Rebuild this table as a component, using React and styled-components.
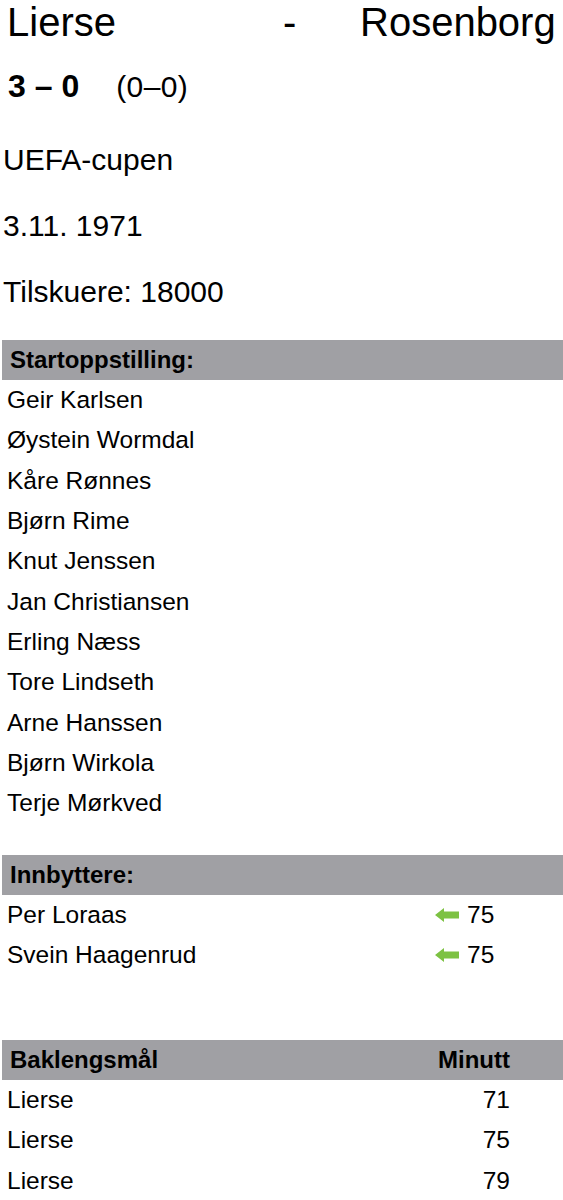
import React from "react";
import styled, { createGlobalStyle } from "styled-components";

const Global = createGlobalStyle`
  html, body { margin: 0; padding: 0; background: #fff; }
  body { font-family: "Liberation Sans", Arial, sans-serif; color: #000; }
`;

const Page = styled.div`
  width: 563px;
  overflow: hidden;
`;

const TitleRow = styled.div`
  display: grid;
  grid-template-columns: 276px 77px auto;
  padding-left: 7px;
  font-size: 40px;
  line-height: 45px;
  white-space: nowrap;
`;

const ScoreRow = styled.div`
  margin-top: 23px;
  padding-left: 8px;
  font-size: 30px;
  line-height: 36px;
  height: 36px;
  display: flex;
  align-items: baseline;
`;

const Score = styled.span`
  font-weight: bold;
  font-size: 32px;
`;

const HalfTime = styled.span`
  margin-left: 37px;
  letter-spacing: 0.4px;
`;

const Info = styled.div`
  padding-left: 3px;
  font-size: 30px;
  line-height: 66px;
`;

const InfoBlock = styled.div`
  margin-top: 23px;
  margin-bottom: 15px;
`;

const Table = styled.div`
  margin-left: 2px;
  margin-top: ${(p) => p.$top || 0}px;
  font-size: 24.5px;
`;

const HeadRow = styled.div`
  display: grid;
  grid-template-columns: ${(p) => p.$cols || "1fr"};
  background: #a0a0a4;
  height: 40px;
  align-items: center;
  font-weight: bold;
  font-size: 24px;
`;

const Row = styled.div`
  display: grid;
  grid-template-columns: ${(p) => p.$cols || "1fr"};
  height: 40.3px;
  align-items: center;
  white-space: nowrap;
`;

const HeadCell = styled.div`
  padding-left: 8px;
  text-align: ${(p) => (p.$right ? "right" : "left")};
  padding-right: ${(p) => (p.$right ? "53px" : "0")};
`;

const Cell = styled.div`
  padding-left: 5px;
  text-align: ${(p) => (p.$right ? "right" : "left")};
  padding-right: ${(p) => (p.$right ? "53px" : "0")};
`;

const SubCell = styled.div`
  display: flex;
  align-items: center;
  gap: 8px;
`;

const Arrow = () => (
  <svg width="24" height="14" viewBox="0 0 24 14" aria-hidden="true">
    <polygon
      points="0,7 9,0 9,3.5 24,3.5 24,10.5 9,10.5 9,14"
      fill="#7dc243"
    />
  </svg>
);

const starters = [
  "Geir Karlsen",
  "Øystein Wormdal",
  "Kåre Rønnes",
  "Bjørn Rime",
  "Knut Jenssen",
  "Jan Christiansen",
  "Erling Næss",
  "Tore Lindseth",
  "Arne Hanssen",
  "Bjørn Wirkola",
  "Terje Mørkved",
];

const subs = [
  { name: "Per Loraas", min: 75 },
  { name: "Svein Haagenrud", min: 75 },
];

const goals = [
  { team: "Lierse", min: 71 },
  { team: "Lierse", min: 75 },
  { team: "Lierse", min: 79 },
];

export default function App() {
  return (
    <Page>
      <Global />
      <TitleRow>
        <span>Lierse</span>
        <span>-</span>
        <span>Rosenborg</span>
      </TitleRow>
      <ScoreRow>
        <Score>3 – 0</Score>
        <HalfTime>(0–0)</HalfTime>
      </ScoreRow>
      <InfoBlock>
        <Info>UEFA-cupen</Info>
        <Info>3.11. 1971</Info>
        <Info>Tilskuere: 18000</Info>
      </InfoBlock>

      <Table>
        <HeadRow>
          <HeadCell>Startoppstilling:</HeadCell>
        </HeadRow>
        {starters.map((n) => (
          <Row key={n}>
            <Cell>{n}</Cell>
          </Row>
        ))}
      </Table>

      <Table $top={31.7}>
        <HeadRow>
          <HeadCell>Innbyttere:</HeadCell>
        </HeadRow>
        {subs.map((s) => (
          <Row key={s.name} $cols="433px 1fr">
            <Cell>{s.name}</Cell>
            <SubCell>
              <Arrow />
              <span>{s.min}</span>
            </SubCell>
          </Row>
        ))}
      </Table>

      <Table $top={64.4}>
        <HeadRow $cols="1fr auto">
          <HeadCell>Baklengsmål</HeadCell>
          <HeadCell $right>Minutt</HeadCell>
        </HeadRow>
        {goals.map((g, i) => (
          <Row key={i} $cols="1fr auto">
            <Cell>{g.team}</Cell>
            <Cell $right>{g.min}</Cell>
          </Row>
        ))}
      </Table>
    </Page>
  );
}
